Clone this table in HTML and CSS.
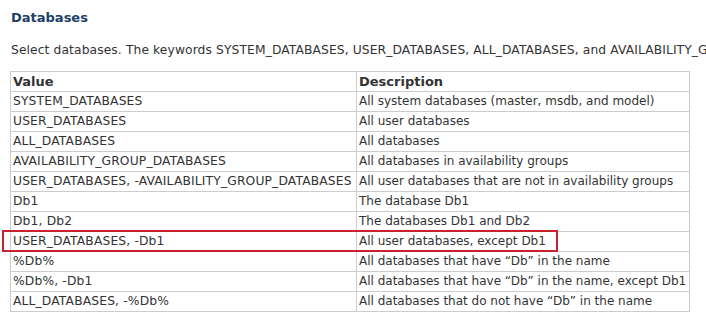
FILE: index.html
```html
<!DOCTYPE html>
<html>
<head>
<meta charset="utf-8">
<link rel="stylesheet" href="styles.css">
</head>
<body>
<div class="page">
  <h3 class="title">Databases</h3>
  <p class="intro">Select databases. The keywords SYSTEM_DATABASES, USER_DATABASES, ALL_DATABASES, and AVAILABILITY_GROUP_DATABASES are supported.</p>
  <table class="tbl">
    <colgroup><col class="c1"><col class="c2"></colgroup>
    <tr><th>Value</th><th>Description</th></tr>
    <tr><td>SYSTEM_DATABASES</td><td>All system databases (master, msdb, and model)</td></tr>
    <tr><td>USER_DATABASES</td><td>All user databases</td></tr>
    <tr><td>ALL_DATABASES</td><td>All databases</td></tr>
    <tr><td>AVAILABILITY_GROUP_DATABASES</td><td>All databases in availability groups</td></tr>
    <tr><td>USER_DATABASES, -AVAILABILITY_GROUP_DATABASES</td><td>All user databases that are not in availability groups</td></tr>
    <tr><td>Db1</td><td>The database Db1</td></tr>
    <tr><td>Db1, Db2</td><td>The databases Db1 and Db2</td></tr>
    <tr class="hl"><td>USER_DATABASES, -Db1</td><td>All user databases, except Db1<span class="mark"></span></td></tr>
    <tr><td>%Db%</td><td>All databases that have “Db” in the name</td></tr>
    <tr><td>%Db%, -Db1</td><td>All databases that have “Db” in the name, except Db1</td></tr>
    <tr><td>ALL_DATABASES, -%Db%</td><td>All databases that do not have “Db” in the name</td></tr>
  </table>
</div>
</body>
</html>
```
FILE: styles.css
```css
html, body {
  margin: 0;
  padding: 0;
  background: #fff;
}
.page {
  padding: 0 0 0 10px;
  font-family: "DejaVu Sans", Verdana, sans-serif;
  font-size: 12.3px;
  color: #333;
  white-space: nowrap;
  overflow: hidden;
  width: 696px;
  height: 324px;
}
.title {
  margin: 0;
  padding-top: 9px;
  height: 18px;
  line-height: 18px;
  font-size: 13px;
  font-weight: bold;
  color: #1e3f66;
  padding-left: 1px;
}
.intro {
  margin: 0;
  padding-top: 14px;
  line-height: 18px;
  height: 30px;
  padding-left: 1px;
  overflow: hidden;
  letter-spacing: 0.1px;
}
.tbl {
  border-collapse: collapse;
  table-layout: fixed;
  width: 679px;
}
.c1 { width: 346px; }
.c2 { width: 333px; }
.tbl th, .tbl td {
  border: 1px solid #ccc;
  height: 19px;
  padding: 0 0 0 2px;
  text-align: left;
  line-height: 19px;
  overflow: visible;
}
.tbl td:first-child {
  letter-spacing: 0.15px;
}
.tbl td:last-child {
  font-size: 12px;
}
.tbl th {
  font-weight: bold;
  font-size: 13px;
}
.hl td:last-child {
  position: relative;
}
.mark {
  position: absolute;
  left: -355px;
  top: -2px;
  width: 552px;
  height: 18px;
  border: 2px solid #c8222c;
  pointer-events: none;
}
```
